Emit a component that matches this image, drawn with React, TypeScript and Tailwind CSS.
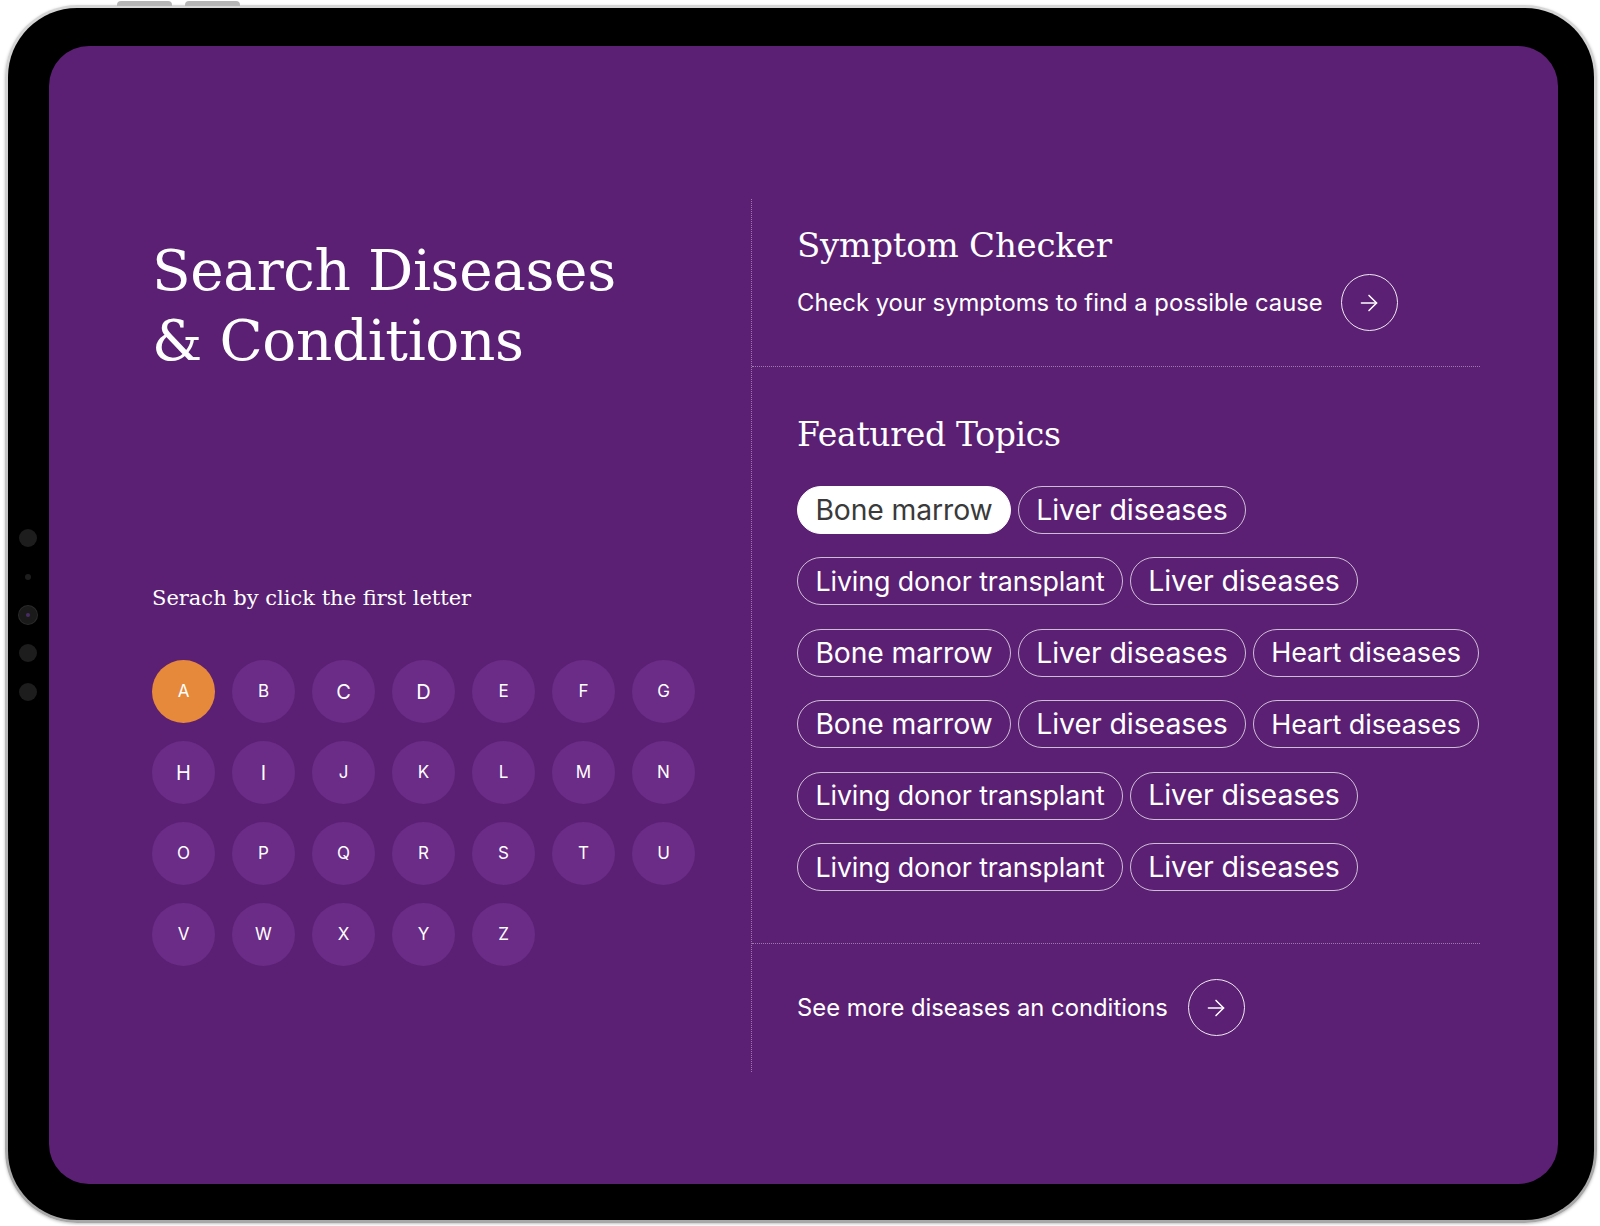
import { ArrowRight } from "lucide-react";

const serif = "font-['DejaVu_Serif',serif]";
const sans = "font-['Inter','Noto_Sans',sans-serif]";

const letters = "ABCDEFGHIJKLMNOPQRSTUVWXYZ".split("");
const bigLetters = ["C", "D", "H", "I"];

// chip sizes taken from the mockup, each label is set a bit differently
const chipStyle: Record<string, string> = {
  "Bone marrow": "w-[214px] text-[28.3px]",
  "Liver diseases": "w-[228px] text-[28.5px]",
  "Living donor transplant": "w-[326px] text-[26.8px]",
  "Heart diseases": "w-[226px] text-[27px]",
};

const topicRows: string[][] = [
  ["Bone marrow", "Liver diseases"],
  ["Living donor transplant", "Liver diseases"],
  ["Bone marrow", "Liver diseases", "Heart diseases"],
  ["Bone marrow", "Liver diseases", "Heart diseases"],
  ["Living donor transplant", "Liver diseases"],
  ["Living donor transplant", "Liver diseases"],
];

function ArrowButton() {
  return (
    <span className="flex h-[57px] w-[57px] shrink-0 items-center justify-center rounded-full border-[1.5px] border-white/90">
      <ArrowRight size={26} strokeWidth={1.4} className="text-white" />
    </span>
  );
}

function LetterGrid() {
  return (
    <div className="mt-[48px] grid grid-cols-[repeat(7,63px)] gap-x-[17px] gap-y-[18px]">
      {letters.map((l) => (
        <button
          key={l}
          className={`flex h-[63px] w-[63px] items-center justify-center rounded-full text-white ${sans} ${
            l === "A" ? "bg-[#e6893b]" : "bg-[#6a2c86]"
          } ${bigLetters.includes(l) ? "text-[20px]" : "text-[17px]"}`}
        >
          {l}
        </button>
      ))}
    </div>
  );
}

function Chip({ label, active }: { label: string; active?: boolean }) {
  return (
    <span
      className={`flex h-[48px] items-center justify-center rounded-full border-[1.5px] leading-none tracking-[-0.1px] ${sans} ${
        chipStyle[label]
      } ${active ? "border-white bg-white text-[#3a3a3a]" : "border-white/70 text-white"}`}
    >
      {label}
    </span>
  );
}

function Screen() {
  return (
    <div className="flex h-full w-full rounded-[40px] bg-[#5b2073] pt-[153px]">
      {/* left: title + alphabet */}
      <div className="w-[702px] shrink-0 pl-[103px]">
        <h1 className={`mt-[37px] text-[56.5px] leading-[70px] tracking-[-0.4px] text-white ${serif}`}>
          Search Diseases
          <br />& Conditions
        </h1>
        <p className={`mt-[208px] text-[21px] leading-[28px] text-white ${serif}`}>
          Serach by click the first letter
        </p>
        <LetterGrid />
      </div>

      {/* right: checker + topics */}
      <div className="flex h-[873px] w-[729px] flex-col border-l border-dotted border-white/40">
        <div className="h-[168px] border-b border-dotted border-white/40 pl-[45px] pt-[26px]">
          <h2 className={`text-[34px] leading-[40px] tracking-[-0.2px] text-white ${serif}`}>
            Symptom Checker
          </h2>
          <a href="#" className="mt-[9px] flex items-center gap-[18px]">
            <span className={`text-[23.8px] text-white ${sans}`}>
              Check your symptoms to find a possible cause
            </span>
            <ArrowButton />
          </a>
        </div>

        <div className="h-[577px] border-b border-dotted border-white/40 pl-[45px] pt-[48px]">
          <h2 className={`text-[33px] leading-[40px] tracking-[-0.3px] text-white ${serif}`}>
            Featured Topics
          </h2>
          <div className="mt-[31px] flex flex-col gap-[23.4px]">
            {topicRows.map((row, i) => (
              <div key={i} className="flex gap-[7px]">
                {row.map((t, j) => (
                  <Chip key={j} label={t} active={i === 0 && j === 0} />
                ))}
              </div>
            ))}
          </div>
        </div>

        <div className="flex-1 pl-[45px] pt-[35px]">
          <a href="#" className="flex items-center gap-[20px]">
            <span className={`text-[23.8px] text-white ${sans}`}>See more diseases an conditions</span>
            <ArrowButton />
          </a>
        </div>
      </div>
    </div>
  );
}

export default function App() {
  return (
    <div className="relative h-[1226px] w-[1600px] overflow-hidden bg-white pl-[5px] pt-[5px]">
      {/* top hardware buttons */}
      <span className="absolute left-[117px] top-[1px] h-[5px] w-[55px] rounded-t-sm bg-[#b5b5b5]" />
      <span className="absolute left-[185px] top-[1px] h-[5px] w-[55px] rounded-t-sm bg-[#b5b5b5]" />

      <div className="h-[1218px] w-[1592px] rounded-[72px] bg-gradient-to-b from-[#d6d6d6] to-[#a8a8a8] p-[3px] shadow-[0_1px_3px_rgba(0,0,0,0.25)]">
        <div className="h-full w-full rounded-[69px] bg-black pb-[36px] pl-[41px] pr-[36px] pt-[38px]">
          <Screen />
        </div>
      </div>

      {/* camera / sensors on the left bezel */}
      <span className="absolute left-[19px] top-[529px] h-[18px] w-[18px] rounded-full bg-[#1d1d1d]" />
      <span className="absolute left-[25px] top-[574px] h-[6px] w-[6px] rounded-full bg-[#1d1d1d]" />
      <span className="absolute left-[19px] top-[606px] flex h-[18px] w-[18px] items-center justify-center rounded-full bg-[#1a1a1a] ring-1 ring-[#2a2a2a]">
        <span className="h-[4px] w-[4px] rounded-full bg-[#4a2a66]" />
      </span>
      <span className="absolute left-[19px] top-[644px] h-[18px] w-[18px] rounded-full bg-[#1d1d1d]" />
      <span className="absolute left-[19px] top-[683px] h-[18px] w-[18px] rounded-full bg-[#1d1d1d]" />
    </div>
  );
}
